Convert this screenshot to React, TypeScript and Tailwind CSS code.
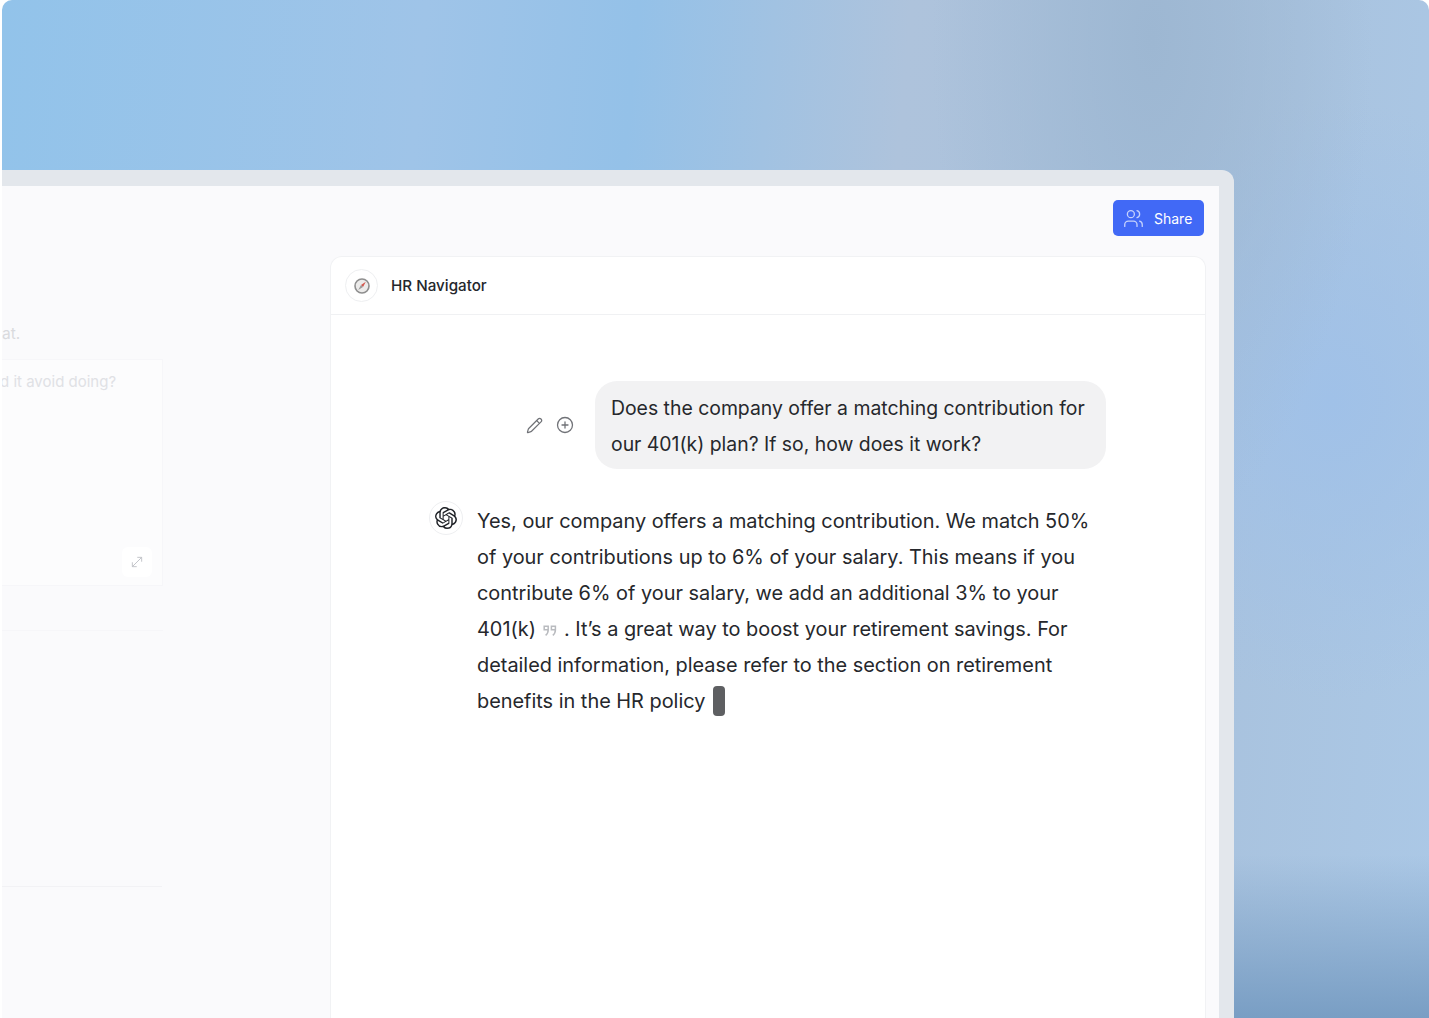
import React from 'react';
import { Users, Pencil, CirclePlus, MoveDiagonal } from 'lucide-react';
import { SiOpenai } from 'react-icons/si';

function CompassBadge() {
  return (
    <div className="flex h-[33px] w-[33px] items-center justify-center rounded-full border border-[#eeeff1] bg-white">
      <svg width="18" height="18" viewBox="0 0 18 18">
        <circle cx="9" cy="9" r="7" fill="#ecebea" stroke="#8e8e8e" strokeWidth="1.6" />
        <path d="M12.8 4.8 L8 8 L10 10 Z" fill="#d4574e" />
        <path d="M5.2 13 L8 8 L10 10 Z" fill="#9a9a9a" />
      </svg>
    </div>
  );
}

// small closing-quote mark that sits after a citation
function CiteMark() {
  return (
    <svg width="14" height="12" viewBox="0 0 14 12" fill="none" stroke="#b9bbbf" strokeWidth="1.5" className="mx-[7px] inline-block align-[-1px]">
      <path d="M1.2 1.2h4v3.6h-4zM5.2 4.8c0 2.6-1 4.4-2.6 5.6" />
      <path d="M8.4 1.2h4v3.6h-4zM12.4 4.8c0 2.6-1 4.4-2.6 5.6" />
    </svg>
  );
}

function Sidebar() {
  return (
    <aside className="flex w-[328px] shrink-0 flex-col">
      <p className="mt-[67px] h-[22px] text-[15.5px] leading-[22px] text-[#d9dade]">at.</p>
      <div className="mt-[14px] flex h-[227px] w-[161px] flex-col justify-between border border-l-0 border-[#f6f6f9] bg-[#fcfcfd] pb-2 pr-2 pt-[11px]">
        <p className="-ml-[2px] whitespace-nowrap text-[15px] leading-[22px] text-[#e0e1e5]">d it avoid doing?</p>
        <div className="mr-[2px] flex h-[30px] w-[30px] items-center justify-center self-end rounded-md bg-white">
          <MoveDiagonal size={16} strokeWidth={1.5} className="text-[#c4c6cb]" />
        </div>
      </div>
      <div className="mt-[44px] h-px w-[161px] bg-[#f6f6f9]" />
      <div className="mt-[255px] h-px w-[160px] bg-[#f2f2f5]" />
    </aside>
  );
}

function ChatCard() {
  return (
    <section className="flex h-[780px] w-[876px] flex-col rounded-t-xl border border-b-0 border-[#f1f2f4] bg-white">
      <header className="flex h-[58px] shrink-0 items-center gap-[13px] border-b border-[#f0f1f3] pl-[14px]">
        <CompassBadge />
        <span className="mt-px text-[15.2px] font-medium text-[#24272c]">HR Navigator</span>
      </header>

      <div className="flex flex-col pl-[98px] pt-[66px] leading-[36px] text-[#26282c]">
        <div className="flex items-center justify-end pr-[99px] text-[19.4px]">
          <div className="mr-[21px] flex items-center gap-[13px] text-[#707277]">
            <Pencil size={17} strokeWidth={1.7} />
            <CirclePlus size={18} strokeWidth={1.7} />
          </div>
          <div className="w-[511px] rounded-[22px] bg-[#f2f2f3] px-4 pb-[7px] pt-[9px]">
            Does the company offer a matching contribution for our 401(k) plan? If so, how does it work?
          </div>
        </div>

        <div className="mt-[32px] flex gap-[14px] text-[19.9px]">
          <div className="flex h-[34px] w-[34px] shrink-0 items-center justify-center rounded-full border border-[#eeeff1] bg-white">
            <SiOpenai size={22} className="text-[#1f2227]" />
          </div>
          <p className="mt-[2px] w-[620px]">
            Yes, our company offers a matching contribution. We match 50% of your contributions up to 6% of your salary. This means if you contribute 6% of your salary, we add an additional 3% to your 401(k)
            <CiteMark />
            . It’s a great way to boost your retirement savings. For detailed information, please refer to the section on retirement benefits in the HR policy
            <span className="ml-[8px] inline-block h-[30px] w-3 rounded-[4px] bg-[#5e5f62] align-[-8px]" />
          </p>
        </div>
      </div>
    </section>
  );
}

export default function App() {
  return (
    <div className="h-[1018px] w-[1429px] overflow-hidden bg-white pl-[2px] font-['Inter',sans-serif]">
      <div className="h-full w-full overflow-hidden rounded-t-[10px] bg-[linear-gradient(180deg,transparent_0%,transparent_84%,#799ec4_100%),radial-gradient(ellipse_220px_500px_at_1150px_40px,#9db7d2_0%,transparent_100%),radial-gradient(ellipse_260px_300px_at_1330px_400px,#a0c1e8_0%,transparent_100%),linear-gradient(95deg,#92c3ea_0%,#9fc4e8_28%,#94c1e8_42%,#aec3dc_60%,#a8c1dc_80%,#abc8e6_100%)] pt-[170px]">
        <div className="h-[848px] w-[1232px] rounded-tr-xl bg-[#e3e7ec] pr-[15px] pt-4">
          <div className="h-[832px] bg-[#fafafc]">
            <div className="flex h-[70px] items-start justify-end pr-[15px] pt-[14px]">
              <button className="flex h-9 w-[91px] items-center gap-[10px] rounded-[5px] bg-[#4169f6] pl-[10px] pt-px text-sm text-white">
                <Users size={21} strokeWidth={1.5} className="text-[#c5d2fc]" />
                Share
              </button>
            </div>
            <div className="flex">
              <Sidebar />
              <ChatCard />
            </div>
          </div>
        </div>
      </div>
    </div>
  );
}
